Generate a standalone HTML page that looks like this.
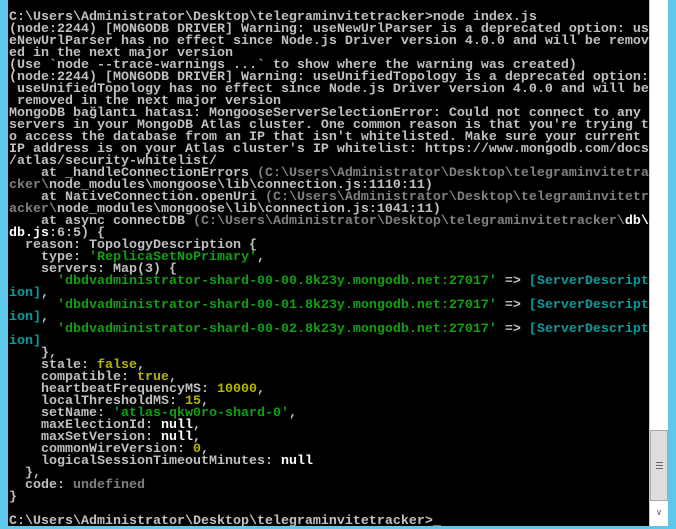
<!DOCTYPE html>
<html><head><meta charset="utf-8"><style>
html,body{margin:0;padding:0;width:676px;height:529px;overflow:hidden;background:#5ec8ea;}
#con{position:absolute;left:8px;top:0;width:641px;height:526px;background:#000;overflow:hidden;}
pre{margin:0;position:absolute;left:1px;top:12px;font-family:"Liberation Mono",monospace;font-size:13.33px;line-height:12px;color:#c0c0c0;white-space:pre;font-weight:bold;}
.g{color:#808080}.gr{color:#10a010}.c{color:#0a9a9a}.y{color:#b5b500}.w{color:#fff}
#sb{position:absolute;left:649px;top:0;width:19px;height:526px;background:#fff;border-left:1px solid #ccc;box-sizing:border-box;}
#th{position:absolute;left:650px;top:430px;width:18px;height:71px;background:#ddd;border:1px solid #aaa;box-sizing:border-box;}
#th i{position:absolute;left:5px;width:7px;height:1px;background:#666;}
#dn{position:absolute;left:650px;top:502px;width:18px;height:22px;background:#fff;color:#666;font:9px "DejaVu Sans",sans-serif;text-align:center;line-height:22px;}
</style></head><body>
<div id="con"><pre>C:\Users\Administrator\Desktop\telegraminvitetracker&gt;node index.js
(node:2244) [MONGODB DRIVER] Warning: useNewUrlParser is a deprecated option: us
eNewUrlParser has no effect since Node.js Driver version 4.0.0 and will be remov
ed in the next major version
(Use `node --trace-warnings ...` to show where the warning was created)
(node:2244) [MONGODB DRIVER] Warning: useUnifiedTopology is a deprecated option:
 useUnifiedTopology has no effect since Node.js Driver version 4.0.0 and will be
 removed in the next major version
MongoDB bağlantı hatası: MongooseServerSelectionError: Could not connect to any
servers in your MongoDB Atlas cluster. One common reason is that you're trying t
o access the database from an IP that isn't whitelisted. Make sure your current
IP address is on your Atlas cluster's IP whitelist: https://www.mongodb.com/docs
/atlas/security-whitelist/
    at _handleConnectionErrors <span class="g">(C:\Users\Administrator\Desktop\telegraminvitetra</span>
<span class="g">cker\</span>node_modules\mongoose\lib\connection.js:1110:11)
    at NativeConnection.openUri <span class="g">(C:\Users\Administrator\Desktop\telegraminvitetr</span>
<span class="g">acker\</span>node_modules\mongoose\lib\connection.js:1041:11)
    at async connectDB <span class="g">(C:\Users\Administrator\Desktop\telegraminvitetracker\</span><span class="w">db\</span>
<span class="w">db.js</span>:6:5) {
  reason: TopologyDescription {
    type: <span class="gr">'ReplicaSetNoPrimary'</span>,
    servers: Map(3) {
      <span class="gr">'dbdvadministrator-shard-00-00.8k23y.mongodb.net:27017'</span> =&gt; <span class="c">[ServerDescript</span>
<span class="c">ion]</span>,
      <span class="gr">'dbdvadministrator-shard-00-01.8k23y.mongodb.net:27017'</span> =&gt; <span class="c">[ServerDescript</span>
<span class="c">ion]</span>,
      <span class="gr">'dbdvadministrator-shard-00-02.8k23y.mongodb.net:27017'</span> =&gt; <span class="c">[ServerDescript</span>
<span class="c">ion]</span>
    },
    stale: <span class="y">false</span>,
    compatible: <span class="y">true</span>,
    heartbeatFrequencyMS: <span class="y">10000</span>,
    localThresholdMS: <span class="y">15</span>,
    setName: <span class="gr">'atlas-qkw0ro-shard-0'</span>,
    maxElectionId: <span class="w">null</span>,
    maxSetVersion: <span class="w">null</span>,
    commonWireVersion: <span class="y">0</span>,
    logicalSessionTimeoutMinutes: <span class="w">null</span>
  },
  code: <span class="g">undefined</span>
}

C:\Users\Administrator\Desktop\telegraminvitetracker&gt;_</pre></div>
<div id="sb"></div>
<div id="th"><i style="top:31px"></i><i style="top:34px"></i><i style="top:37px"></i></div>
<div id="dn">&#8744;</div>
</body></html>
